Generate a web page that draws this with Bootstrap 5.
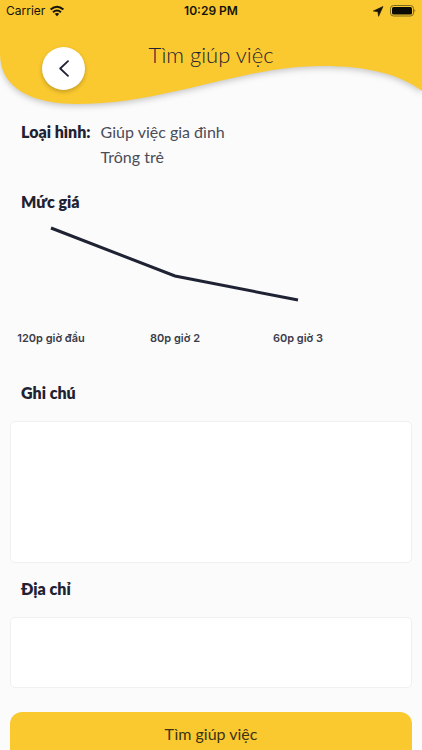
<!DOCTYPE html>
<html lang="vi">
<head>
<meta charset="utf-8">
<meta name="viewport" content="width=device-width, initial-scale=1">
<title>Tìm giúp việc</title>
<link href="https://cdn.jsdelivr.net/npm/bootstrap@5.3.0/dist/css/bootstrap.min.css" rel="stylesheet">
<style>
  :root { --ink: #1f2233; --sun: #fac92f; }
  body { background: #fbfbfb; color: var(--ink); font-family: Lato, "Noto Sans", sans-serif; font-size: 16px; line-height: 25px; }
  .top-area { height: 115px; }
  .wave { z-index: 0; height: 116px; filter: drop-shadow(0 2px 3px rgba(0,0,0,.22)); }
  .status { height: 22px; padding: 0 6px; font: 400 12px/22px Inter, sans-serif; color: #15130a; }
  .status .clock { font-weight: 600; }
  .title-row { grid-template-columns: 43px 1fr 43px; padding: 0 42px; }
  .back { width: 43px; height: 43px; margin-top: 25px; background: #fff; box-shadow: 0 2px 4px rgba(0,0,0,.22); }
  .page-title { font-size: 22px; line-height: 28px; font-weight: 300; margin-top: 19px; }
  .section-title { font-size: 16px; line-height: 25px; font-weight: 800; }
  .kinds { color: #4a4c58; }
  .inset { padding-left: 21px; padding-right: 21px; }
  .kind-row { gap: 10px; }
  .chart text { font: 600 11px Inter, sans-serif; fill: #3a3c49; text-anchor: middle; }
  .gutter { padding: 0 10px; }
  .field { background: #fff; border: 1px solid #f0f0f2; border-radius: 5px; resize: none; }
  .note-label { margin-top: 28px; }
  .address-label { margin-top: 13px; }
  .note { height: 142px; }
  .address { height: 71px; }
  .submit { background: var(--sun); color: #3c3416; border-radius: 12px 12px 0 0; font-size: 16px; line-height: 24px; padding: 10px 0 4px; border: 0; }
  .submit:hover { background: #f3c023; }
</style>
</head>
<body>
<header class="top-area position-relative">
  <svg class="wave position-absolute top-0 start-0 w-100" viewBox="0 0 422 116" preserveAspectRatio="none" aria-hidden="true">
    <path fill="#fac92f" d="M0 0H422V91C400 74 366 66 322 66C240 66 166 104 77 104C30 104 0 87 0 54Z"/>
  </svg>
  <div class="position-relative">
    <div class="status row g-0">
      <div class="col d-flex align-items-center gap-1">
        <span>Carrier</span>
        <svg width="16" height="12" viewBox="0 0 16 12" fill="none" stroke="#15130a" stroke-width="2" aria-hidden="true">
          <path d="M1.6 4.6Q8-1.2 14.4 4.6M4 7.2Q8 3.7 12 7.2"/><path fill="#15130a" stroke="none" d="M5.7 8.8Q8 7 10.3 8.8L8 11.2Z"/>
        </svg>
      </div>
      <div class="col-auto clock">10:29 PM</div>
      <div class="col d-flex align-items-center justify-content-end gap-1">
        <svg width="12" height="11" viewBox="0 0 12 11" aria-hidden="true"><path d="M10 .5L.3 5L4.9 5.7L5.6 10.3Z" fill="#15130a" stroke="#15130a" stroke-width=".6" stroke-linejoin="round"/></svg>
        <svg width="27" height="12" viewBox="0 0 27 12" aria-hidden="true">
          <rect x="1.5" y=".5" width="23" height="10.5" rx="3" fill="none" stroke="#7f681d"/>
          <rect x="3" y="2" width="20" height="7.5" rx="1.5" fill="#0b0a05"/>
          <path d="M25.5 4Q27.2 5.8 25.5 7.5Z" fill="#7f681d"/>
        </svg>
      </div>
    </div>
    <div class="title-row d-grid">
      <button type="button" class="back btn rounded-circle border-0 p-0 d-flex align-items-center justify-content-center" aria-label="Quay lại">
        <svg width="10" height="17" viewBox="0 0 10 17" fill="none" stroke="#1f2233" stroke-width="1.8" stroke-linecap="round" stroke-linejoin="round" aria-hidden="true"><path d="M9 1.2L1.2 8.5L9 15.8"/></svg>
      </button>
      <h1 class="page-title text-center mb-0">Tìm giúp việc</h1>
    </div>
  </div>
</header>
<main>
  <div class="inset kind-row d-flex pt-1">
    <div class="section-title">Loại hình:</div>
    <div class="kinds"><div>Giúp việc gia đình</div><div>Trông trẻ</div></div>
  </div>
  <h2 class="section-title inset mt-3 pt-1 mb-2 pb-1">Mức giá</h2>
  <svg class="chart d-block w-100" viewBox="0 0 422 126" role="img" aria-label="Mức giá theo giờ">
    <path d="M51 2L175 50L298 74" fill="none" stroke="#1f2233" stroke-width="3"/>
    <text x="51" y="116">120p giờ đầu</text>
    <text x="175" y="116">80p giờ 2</text>
    <text x="298" y="116">60p giờ 3</text>
  </svg>
  <form>
    <label for="note" class="note-label section-title inset d-block mb-3">Ghi chú</label>
    <div class="gutter"><textarea id="note" class="field note form-control"></textarea></div>
    <label for="address" class="address-label section-title inset d-block mb-3">Địa chỉ</label>
    <div class="gutter"><textarea id="address" class="field address form-control"></textarea></div>
    <div class="gutter pt-4"><button type="submit" class="submit btn w-100">Tìm giúp việc</button></div>
  </form>
</main>
<script src="https://cdn.jsdelivr.net/npm/bootstrap@5.3.0/dist/js/bootstrap.bundle.min.js"></script>
</body>
</html>
